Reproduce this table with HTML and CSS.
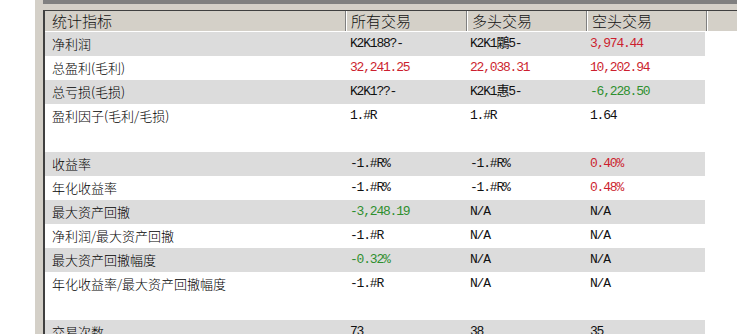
FILE: index.html
```html
<!DOCTYPE html>
<html lang="zh">
<head>
<meta charset="utf-8">
<link rel="stylesheet" href="styles.css">
</head>
<body>
<div class="page">
  <div class="outside"></div>
  <div class="frame">
    <div class="topband"></div>
    <div class="grid">
      <div class="head">
        <div class="hc c0">统计指标</div>
        <div class="hc c1">所有交易</div>
        <div class="hc c2">多头交易</div>
        <div class="hc c3">空头交易</div>
        <div class="hc cfill"></div>
      </div>
      <div class="row g"><div class="lab">净利润</div><div class="v">K2K188?-</div><div class="v">K2K1鷴5-</div><div class="v red">3,974.44</div></div>
      <div class="row"><div class="lab">总盈利(毛利)</div><div class="v red">32,241.25</div><div class="v red">22,038.31</div><div class="v red">10,202.94</div></div>
      <div class="row g"><div class="lab">总亏损(毛损)</div><div class="v">K2K1??-</div><div class="v">K2K1惠5-</div><div class="v grn">-6,228.50</div></div>
      <div class="row"><div class="lab">盈利因子(毛利/毛损)</div><div class="v">1.#R</div><div class="v">1.#R</div><div class="v">1.64</div></div>
      <div class="row"></div>
      <div class="row g"><div class="lab">收益率</div><div class="v">-1.#R%</div><div class="v">-1.#R%</div><div class="v red">0.40%</div></div>
      <div class="row"><div class="lab">年化收益率</div><div class="v">-1.#R%</div><div class="v">-1.#R%</div><div class="v red">0.48%</div></div>
      <div class="row g"><div class="lab">最大资产回撤</div><div class="v grn">-3,248.19</div><div class="v">N/A</div><div class="v">N/A</div></div>
      <div class="row"><div class="lab">净利润/最大资产回撤</div><div class="v">-1.#R</div><div class="v">N/A</div><div class="v">N/A</div></div>
      <div class="row g"><div class="lab">最大资产回撤幅度</div><div class="v grn">-0.32%</div><div class="v">N/A</div><div class="v">N/A</div></div>
      <div class="row"><div class="lab">年化收益率/最大资产回撤幅度</div><div class="v">-1.#R</div><div class="v">N/A</div><div class="v">N/A</div></div>
      <div class="row"></div>
      <div class="row g"><div class="lab">交易次数</div><div class="v">73</div><div class="v">38</div><div class="v">35</div></div>
    </div>
  </div>
</div>
</body>
</html>
```

FILE: styles.css
```css
html, body {
  margin: 0;
  padding: 0;
  background: #ffffff;
  overflow: hidden;
  height: 334px;
}
.page {
  display: flex;
  width: 737px;
  height: 334px;
}
.outside {
  width: 35px;
  flex: none;
  background: #ffffff;
}
.frame {
  flex: 1;
  background: #d4d0c8;
  padding-left: 8px;
  display: flex;
  flex-direction: column;
}
.topband {
  height: 4px;
  background: #808080;
  margin-bottom: 6px;
  flex: none;
}
.grid {
  flex: 1;
  background: #ffffff;
  border-top: 1px solid #404040;
  border-left: 2px solid #404040;
  font-family: "Noto Sans CJK SC", "Noto Sans", sans-serif;
  font-size: 13px;
  font-weight: 300;
  color: #000000;
}
.head {
  display: flex;
  height: 20px;
  background: #d4d0c8;
  border-bottom: 1px solid #ffffff;
  font-size: 15px;
  line-height: 20px;
}
.hc {
  box-sizing: border-box;
  border-right: 1px solid #808080;
  box-shadow: inset 1px 0 0 #ffffff;
  padding-left: 5px;
  white-space: nowrap;
  overflow: hidden;
  color: #111111;
}
.hc.c0 { width: 301px; padding-left: 7px; box-shadow: none; }
.hc.c1 { width: 121px; }
.hc.c2 { width: 120px; }
.hc.c3 { width: 120px; }
.hc.cfill { flex: 1; border-right: none; }
.row {
  display: flex;
  width: 660px;
  height: 24px;
  line-height: 24px;
}
.row.g {
  background: #dcdcdc;
}
.lab {
  width: 300px;
  box-sizing: border-box;
  padding-left: 7px;
  white-space: nowrap;
}
.v {
  width: 120px;
  box-sizing: border-box;
  padding-left: 5px;
  font-family: "Liberation Mono", "Noto Sans CJK SC", monospace;
  font-size: 13px;
  font-weight: 400;
  letter-spacing: -1.2px;
  white-space: nowrap;
  color: #111111;
}
.red { color: #cc1f2f; }
.grn { color: #2f8f2f; }
```
